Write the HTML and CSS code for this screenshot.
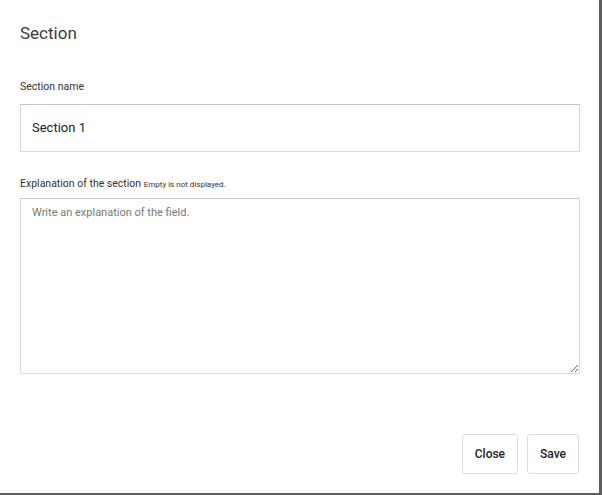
FILE: index.html
```html
<!DOCTYPE html>
<html>
<head>
<meta charset="utf-8">
<link rel="stylesheet" href="styles.css">
</head>
<body>
<div class="modal">
  <h1 class="title">Section</h1>
  <div class="field">
    <label class="label">Section name</label>
    <div class="input">Section 1</div>
  </div>
  <div class="field field-2">
    <label class="label label-2">Explanation of the section <span class="hint">Empty is not displayed.</span></label>
    <textarea class="textarea" placeholder="Write an explanation of the field."></textarea>
  </div>
  <div class="actions">
    <button class="btn">Close</button>
    <button class="btn">Save</button>
  </div>
</div>
</body>
</html>
```
FILE: styles.css
```css
* { box-sizing: border-box; }
html, body { margin: 0; padding: 0; background: #fff; }
body { width: 602px; height: 495px; overflow: hidden; font-family: Roboto, "Noto Sans", sans-serif; color: #333; }
.modal {
  width: 602px;
  height: 495px;
  background: #fff;
  border-right: 3px solid #5f5f5f;
  border-bottom: 2px solid #5f5f5f;
  padding: 0 20px 0 20px;
  display: flex;
  flex-direction: column;
}
.title {
  margin: 0;
  padding-top: 23px;
  font-size: 17px;
  font-weight: 400;
  line-height: 20px;
  color: #3a3a3a;
}
.field { display: flex; flex-direction: column; margin-top: 37px; }
.field-2 { margin-top: 25px; }
.label { font-size: 10.5px; line-height: 14px; color: #333; margin-bottom: 10px; }
.label-2 { margin-bottom: 6px; }
.hint { font-size: 8px; }
.input {
  width: 560px;
  height: 48px;
  border: 1px solid #dadada;
  border-top-color: #c4c3ca;
  padding: 0 11px;
  font-size: 13px;
  line-height: 46px;
  color: #222;
}
.textarea {
  display: block;
  width: 560px;
  height: 176px;
  border: 1px solid #dadada;
  border-top-color: #c4c3ca;
  padding: 7px 11px;
  font-family: Roboto, "Noto Sans", sans-serif;
  font-size: 11px;
  color: #333;
  resize: vertical;
  outline: none;
  margin: 0;
}
.textarea::placeholder { color: #777; }
.actions {
  display: flex;
  justify-content: flex-end;
  gap: 9px;
  margin-top: 60px;
}
.btn {
  height: 40px;
  padding: 0 12px;
  border: 1px solid #dcdcdc;
  border-radius: 3px;
  background: #fff;
  font-family: Roboto, "Noto Sans", sans-serif;
  font-size: 12px;
  font-weight: 500;
  color: #222;
}
```
